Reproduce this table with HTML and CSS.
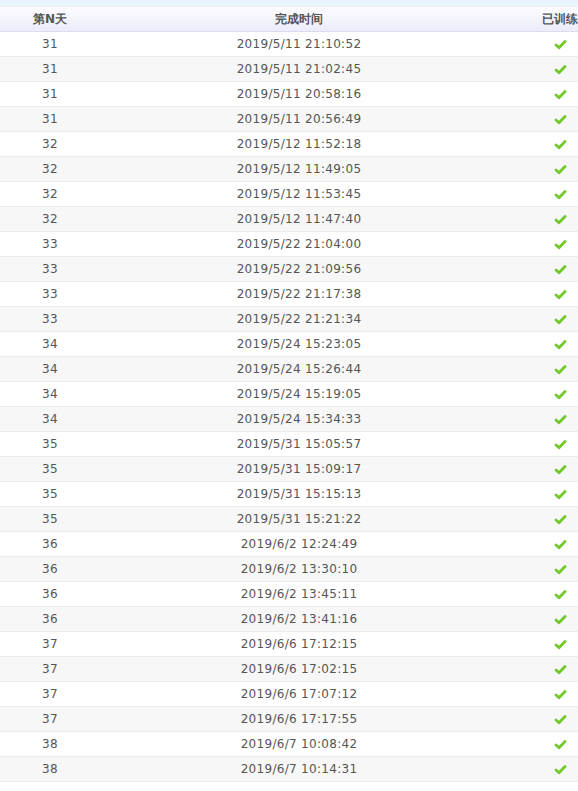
FILE: index.html
```html
<!DOCTYPE html>
<html lang="zh">
<head>
    <meta charset="UTF-8">
    <title>训练记录</title>
    <link rel="stylesheet" href="styles.css">
</head>

<body>
    <div class="topbar"></div>
    <table class="records">
        <thead>
            <tr>
                <th class="col-day">第N天</th>
                <th class="col-time">完成时间</th>
                <th class="col-done">已训练</th>
            </tr>
        </thead>
        <tbody id="rows"></tbody>
    </table>

    <script>
        let records = [
            [31, "2019/5/11 21:10:52"], [31, "2019/5/11 21:02:45"], [31, "2019/5/11 20:58:16"], [31, "2019/5/11 20:56:49"],
            [32, "2019/5/12 11:52:18"], [32, "2019/5/12 11:49:05"], [32, "2019/5/12 11:53:45"], [32, "2019/5/12 11:47:40"],
            [33, "2019/5/22 21:04:00"], [33, "2019/5/22 21:09:56"], [33, "2019/5/22 21:17:38"], [33, "2019/5/22 21:21:34"],
            [34, "2019/5/24 15:23:05"], [34, "2019/5/24 15:26:44"], [34, "2019/5/24 15:19:05"], [34, "2019/5/24 15:34:33"],
            [35, "2019/5/31 15:05:57"], [35, "2019/5/31 15:09:17"], [35, "2019/5/31 15:15:13"], [35, "2019/5/31 15:21:22"],
            [36, "2019/6/2 12:24:49"], [36, "2019/6/2 13:30:10"], [36, "2019/6/2 13:45:11"], [36, "2019/6/2 13:41:16"],
            [37, "2019/6/6 17:12:15"], [37, "2019/6/6 17:02:15"], [37, "2019/6/6 17:07:12"], [37, "2019/6/6 17:17:55"],
            [38, "2019/6/7 10:08:42"], [38, "2019/6/7 10:14:31"]
        ];

        let check = '<svg class="check" width="13" height="11" viewBox="0 0 13 11"><path d="M2 6 L5 8.8 L11 2.5" fill="none" stroke="#72c82c" stroke-width="2.8" stroke-linecap="round" stroke-linejoin="round"/></svg>';

        let dest = document.querySelector("#rows");
        records.forEach(rec => {
            let tr = document.createElement("tr");
            tr.innerHTML = "<td class=\"col-day\">" + rec[0] + "</td><td class=\"col-time\">" + rec[1] + "</td><td class=\"col-done\">" + check + "</td>";
            dest.appendChild(tr);
        });
    </script>
</body>
</html>
```

FILE: styles.css
```css
body {
    margin: 0;
    font-family: "DejaVu Sans", Verdana, sans-serif;
    font-size: 12px;
    letter-spacing: 0.3px;
    color: #555;
    background-color: white;
}

.topbar {
    height: 7px;
    background-color: #e9f4fc;
}

.records {
    width: 100%;
    border-collapse: collapse;
    table-layout: fixed;
}

.records th {
    height: 24px;
    padding: 0;
    font-weight: bold;
    font-size: 12px;
    letter-spacing: 0;
    color: #555;
    background: linear-gradient(#fcfcff, #ececfa);
    border-bottom: 1px solid #dcdcf0;
}

.records td {
    height: 24px;
    padding: 0;
    border-bottom: 1px solid #ececec;
}

.records tbody tr:nth-child(even) {
    background-color: #f7f7f7;
}

.col-day {
    width: 100px;
    text-align: center;
}

.col-time {
    text-align: center;
}

.col-done {
    width: 80px;
    text-align: right;
}

td.col-done {
    padding-right: 11px;
}

.check {
    display: inline-block;
    vertical-align: middle;
}
```
